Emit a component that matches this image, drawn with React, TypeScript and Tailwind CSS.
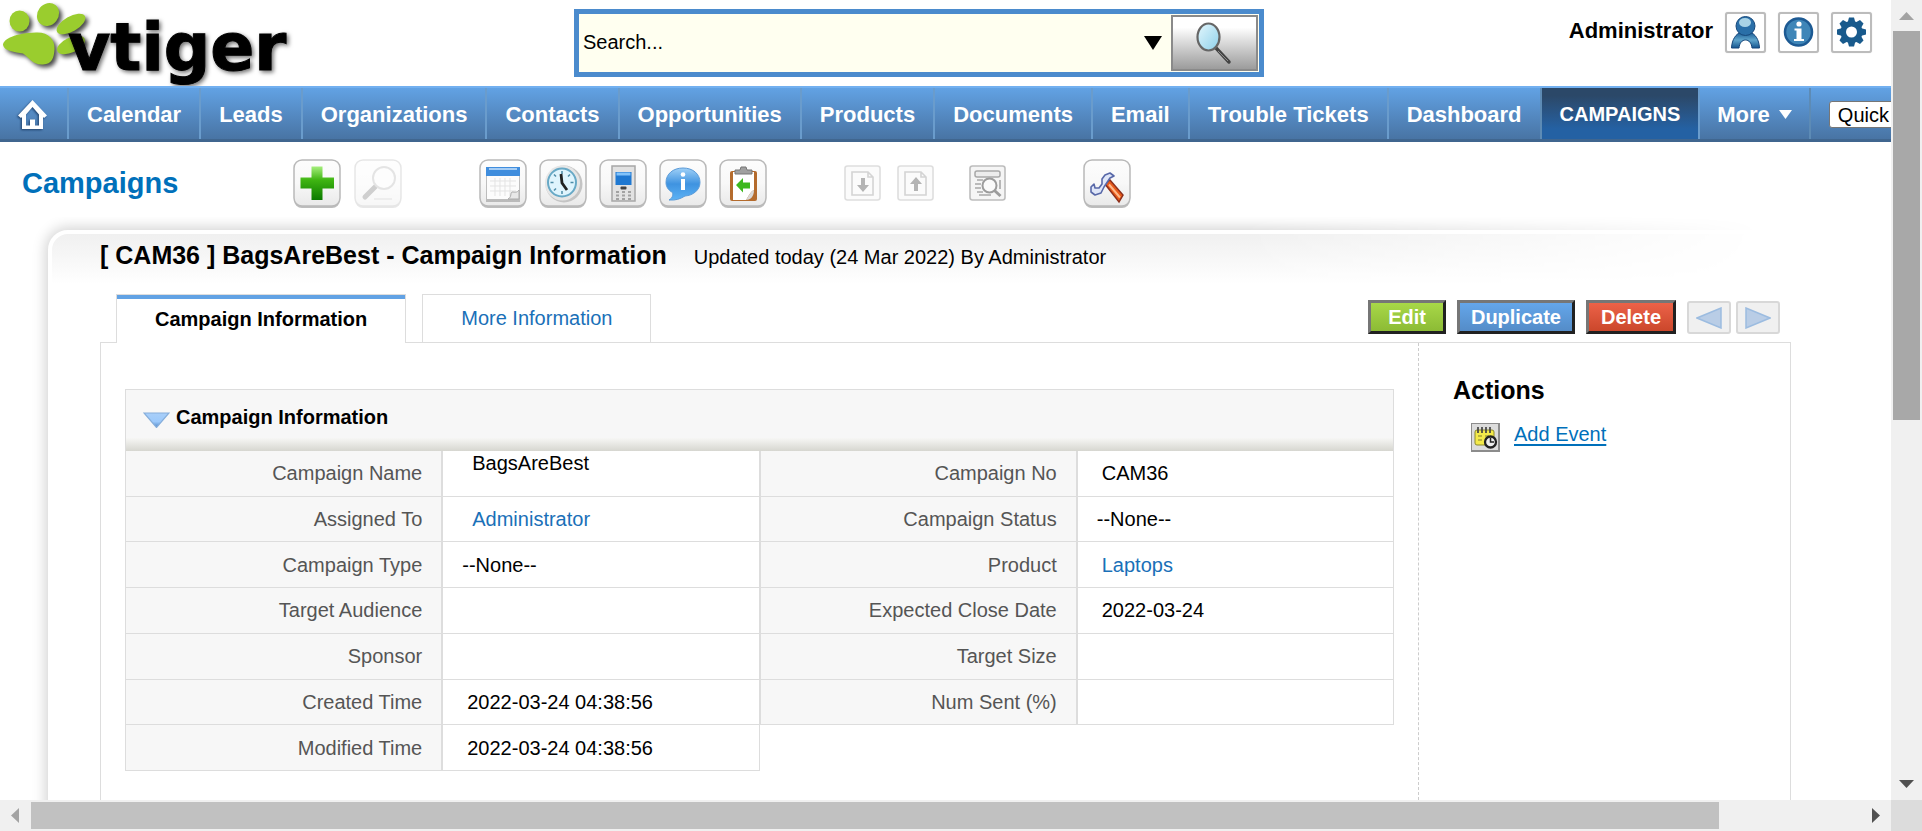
import React from "react";

type Field = { label: string; value?: string; kind?: "inset" | "pick" | "plain" | "raised"; linked?: boolean };

const modules = [
  "Calendar",
  "Leads",
  "Organizations",
  "Contacts",
  "Opportunities",
  "Products",
  "Documents",
  "Email",
  "Trouble Tickets",
  "Dashboard",
];

const rows: [Field, Field?][] = [
  [
    { label: "Campaign Name", value: "BagsAreBest", kind: "raised" },
    { label: "Campaign No", value: "CAM36", kind: "plain" },
  ],
  [
    { label: "Assigned To", value: "Administrator", kind: "inset", linked: true },
    { label: "Campaign Status", value: "--None--", kind: "pick" },
  ],
  [
    { label: "Campaign Type", value: "--None--", kind: "pick" },
    { label: "Product", value: "Laptops", kind: "plain", linked: true },
  ],
  [{ label: "Target Audience" }, { label: "Expected Close Date", value: "2022-03-24", kind: "plain" }],
  [{ label: "Sponsor" }, { label: "Target Size" }],
  [{ label: "Created Time", value: "2022-03-24 04:38:56", kind: "plain" }, { label: "Num Sent (%)" }],
  [{ label: "Modified Time", value: "2022-03-24 04:38:56", kind: "plain" }],
];

const valueStyles: Record<string, string> = {
  raised: "pl-[29px] align-top",
  inset: "pl-[29px] align-middle",
  pick: "pl-[19px] align-middle",
  plain: "pl-6 align-middle",
};

function Defs() {
  return (
    <svg className="absolute size-0" aria-hidden="true">
      <defs>
        <linearGradient id="tile" x1="0" y1="0" x2="0" y2="1">
          <stop offset="0" stopColor="#fdfdfd" />
          <stop offset="0.5" stopColor="#f8f8f8" />
          <stop offset="1" stopColor="#e9e9e9" />
        </linearGradient>
        <linearGradient id="green" x1="0" y1="0" x2="0" y2="1">
          <stop offset="0" stopColor="#a5ee7c" />
          <stop offset="0.4" stopColor="#3fb512" />
          <stop offset="1" stopColor="#0b7a00" />
        </linearGradient>
        <linearGradient id="blue" x1="0" y1="0" x2="0" y2="1">
          <stop offset="0" stopColor="#9fd0f7" />
          <stop offset="0.5" stopColor="#3f93e0" />
          <stop offset="1" stopColor="#5cb2f5" />
        </linearGradient>
        <linearGradient id="steel" x1="0" y1="0" x2="0" y2="1">
          <stop offset="0" stopColor="#14558f" />
          <stop offset="0.5" stopColor="#5fa5cc" />
          <stop offset="1" stopColor="#14558f" />
        </linearGradient>
        <linearGradient id="lens" x1="0" y1="0" x2="1" y2="1">
          <stop offset="0" stopColor="#e4f7fd" />
          <stop offset="1" stopColor="#8dd0ea" />
        </linearGradient>
        <linearGradient id="tri" x1="0" y1="0" x2="0" y2="1">
          <stop offset="0" stopColor="#a9cff9" />
          <stop offset="0.6" stopColor="#9cc9fb" />
          <stop offset="1" stopColor="#4f86c6" />
        </linearGradient>
      </defs>
    </svg>
  );
}

function Logo() {
  return (
    <svg viewBox="0 0 310 86" className="h-[86px] w-[310px] overflow-visible" role="img" aria-label="vtiger">
      <g className="drop-shadow-[3px_3px_2px_rgba(0,0,0,0.7)]" fill="#9acd2e">
        <ellipse cx="19.500" cy="21" rx="10" ry="10.500" />
        <ellipse cx="48" cy="14.500" rx="10.500" ry="12" transform="rotate(38 48 14.500)" />
        <ellipse cx="71" cy="24" rx="16" ry="7.500" transform="rotate(-30 71 24)" />
        <ellipse cx="71" cy="45" rx="15" ry="7.500" transform="rotate(-25 71 45)" />
        <path d="M3 45 C3 39 16 33 36 32.500 C49 32 55 40 54.500 49 C54 58 52 64 43 64.500 C32 65 29 57 23 53.500 C15 52 4 51 3 45 Z" />
      </g>
      <text
        x="68"
        y="70"
        fontSize="65"
        fontWeight="700"
        stroke="#000"
        strokeWidth="1"
        className="font-['DejaVu_Sans'] drop-shadow-[2px_2px_2px_rgba(0,0,0,0.55)]"
      >
        vtiger
      </text>
    </svg>
  );
}

function ToolButton({ label, faded, children }: { label: string; faded?: boolean; children: React.ReactNode }) {
  return (
    <button type="button" aria-label={label} className={faded ? "size-12 opacity-35" : "size-12"}>
      <svg viewBox="0 0 48 48" className="size-12 overflow-visible">
        <rect x="1" y="3" width="46" height="46" rx="8" fill="#bdbdbd" />
        <rect x="1" y="1" width="46" height="46" rx="8" fill="url(#tile)" stroke="#b9b9b9" strokeWidth="1.500" />
        {children}
      </svg>
    </button>
  );
}

function SmallTool({ label, strong, children }: { label: string; strong?: boolean; children: React.ReactNode }) {
  return (
    <button type="button" aria-label={label} className="h-9 w-[37px]">
      <svg viewBox="0 0 37 36" className="h-9 w-[37px]">
        <rect
          x="1"
          y="1"
          width="35"
          height="34"
          rx="2.500"
          fill={strong ? "#f5f5f5" : "#fbfbfb"}
          stroke={strong ? "#bdbdbd" : "#dedede"}
          strokeWidth="1.600"
        />
        {children}
      </svg>
    </button>
  );
}

function HeaderIcon({ label, children }: { label: string; children: React.ReactNode }) {
  return (
    <button
      type="button"
      aria-label={label}
      className="flex size-[41px] items-center justify-center rounded-[3px] border-2 border-[#bcbcbc] bg-white shadow-[0_0_1px_#cccccc]"
    >
      <svg viewBox="0 0 37 37" className="size-[37px]">
        {children}
      </svg>
    </button>
  );
}

function SiteHeader() {
  return (
    <header className="grid h-[86px] shrink-0 grid-cols-[574px_690px_1fr]">
      <Logo />
      <form className="mt-[9px] flex h-[68px] items-center border-5 border-[#4b8bcd] bg-[#fffff0]">
        <input
          type="text"
          aria-label="Search"
          placeholder="Search..."
          className="h-full min-w-0 flex-1 bg-transparent pb-0.5 pl-1 outline-none placeholder:text-black"
        />
        <button type="button" aria-label="Choose modules" className="mr-[9px]">
          <svg viewBox="0 0 18 14" className="h-[14px] w-[18px]">
            <path d="M0 0H18L9 14Z" />
          </svg>
        </button>
        <button
          type="submit"
          aria-label="Find"
          className="mr-px flex h-14 w-[87px] items-center justify-center border-2 border-[#8a8a8a] bg-linear-to-b from-white from-20% to-[#9c9c9c] pr-1"
        >
          <svg viewBox="0 0 40 44" className="h-11 w-10">
            <path d="M23 27L36 41" stroke="#444" strokeWidth="3.500" strokeLinecap="round" />
            <path d="M25 30L35 40" stroke="#8b8b8b" strokeWidth="1" />
            <ellipse cx="15.500" cy="16" rx="11" ry="13.500" fill="url(#lens)" stroke="#666" strokeWidth="2.200" />
          </svg>
        </button>
      </form>
      <div className="flex items-start justify-end gap-3 pt-3 pr-[19px]">
        <span className="text-[22px] leading-[38px] font-bold">Administrator</span>
        <HeaderIcon label="My preferences">
          <path
            d="M4.500 34C5 25 9 20 14 18H23C28 20 32 25 32.500 34H25C24.500 29 22 26 18.500 26C15 26 12.500 29 12 34Z"
            fill="url(#steel)"
            stroke="#14457a"
          />
          <circle cx="18.500" cy="12" r="9.500" fill="#2a6fa8" stroke="#17497c" />
          <ellipse cx="18" cy="8.500" rx="6" ry="4.500" fill="#a9d3e6" />
        </HeaderIcon>
        <HeaderIcon label="Help">
          <circle cx="18.500" cy="18" r="13.500" fill="#3f86b8" stroke="#1d5a93" strokeWidth="2.500" />
          <circle cx="19" cy="10" r="2.600" fill="#fff" />
          <path d="M14.500 14.500H21.500V25H24V27H14V25H16.500V16.500H14.500Z" fill="#fff" />
        </HeaderIcon>
        <HeaderIcon label="Settings">
          <g fill="#195a8c">
            <circle cx="18.500" cy="18" r="11" />
            {[0, 45, 90, 135, 180, 225, 270, 315].map((a) => (
              <path key={a} d="M14.500 9L16 3.500H21L22.500 9Z" transform={`rotate(${a} 18.500 18)`} />
            ))}
          </g>
          <circle cx="18.500" cy="18" r="5.500" fill="#fff" />
        </HeaderIcon>
      </div>
    </header>
  );
}

function ModuleNav() {
  const item = "flex shrink-0 items-center border-l-2 border-[#6a9ccc] px-[18px] pt-0.5";
  return (
    <nav className="flex h-14 shrink-0 overflow-hidden border-t-2 border-b-3 border-t-[#72b0f0] border-b-[#40668f] bg-linear-to-b from-[#62a2e4] to-[#4874a4] text-[22px] font-bold whitespace-nowrap text-white">
      <a href="#home" aria-label="Home" className="flex w-[67px] shrink-0 items-center pt-0.5 pl-[18px]">
        <svg
          viewBox="0 0 29 30"
          className="h-[30px] w-[29px] drop-shadow-[-1px_1px_1px_rgba(20,50,90,0.8)]"
          fill="#fff"
        >
          <path
            d="M14.500 0L29 15.500L26 18L25 17V29H4V17L3 18L0 15.500ZM14.500 7L8 14.500V25.500H12V19.500H17V25.500H21V14.500Z"
            fillRule="evenodd"
          />
        </svg>
      </a>
      {modules.map((name) => (
        <a key={name} href="#module" className={item}>
          {name}
        </a>
      ))}
      <a
        href="#campaigns"
        aria-current="page"
        className="flex shrink-0 items-center border-l-2 border-[#5d8bb5] bg-linear-to-b from-[#2b4868] from-15% to-[#2461a3] to-80% px-[18px] text-[20px]"
      >
        CAMPAIGNS
      </a>
      <button type="button" className="flex shrink-0 items-center gap-[9px] border-l-2 border-[#6a9ccc] px-[17px] pt-0.5">
        More
        <svg viewBox="0 0 13 9" className="h-[9px] w-[13px]" fill="#fff">
          <path d="M0 0H13L6.500 9Z" />
        </svg>
      </button>
      <div className="flex shrink-0 items-center border-l-2 border-[#5d8bb5] pt-0.5 pl-[18px]">
        <select
          aria-label="Quick Create"
          className="h-[27px] w-[170px] appearance-none rounded-[3px] border border-[#767676] bg-white pl-2 text-[20px] leading-6 font-normal text-black"
        >
          <option>Quick Create...</option>
        </select>
      </div>
    </nav>
  );
}

function Toolbar() {
  return (
    <div className="flex h-[75px] shrink-0 items-center gap-[77px] pt-[6px] pl-[22px]">
      <div className="flex">
        <h1 className="w-[271px] text-[29px] leading-9 font-bold text-[#0070ba]">Campaigns</h1>
        <div className="-my-[6px] flex gap-[13px]">
          <ToolButton label="Create Campaign">
            <path d="M18.500 7.500H29.500V18.500H41V29.500H29.500V41H18.500V29.500H7.500V18.500H18.500Z" fill="url(#green)" />
          </ToolButton>
          <ToolButton label="Search in Campaigns" faded>
            <path d="M22 27L11 38" stroke="#777" strokeWidth="5" strokeLinecap="round" />
            <circle cx="30" cy="19" r="11" fill="#fafafa" stroke="#b5b5b5" strokeWidth="2" />
            <path d="M20 40H38" stroke="#ccc" strokeWidth="2" />
          </ToolButton>
        </div>
      </div>
      <div className="flex gap-3">
        <ToolButton label="Open Calendar">
          <rect x="7" y="9" width="34" height="34" fill="#9a9a9a" opacity="0.6" />
          <rect x="8" y="8" width="32" height="32" fill="#fcfcfc" />
          <rect x="7" y="8" width="34" height="9" fill="#3f8ddd" />
          <path d="M10 10H38" stroke="#a5cdf5" strokeWidth="2" />
          <path d="M11 22H37M11 27H37M11 32H37M16 19V37M21 19V37M26 19V37M31 19V37" stroke="#e3e3e3" />
          <path d="M29 40C33 38 31 34 33 33C36 33 38 34 40 31V40Z" fill="#e8e8e8" stroke="#aaa" />
        </ToolButton>
        <ToolButton label="World Clock">
          <circle cx="25" cy="25" r="18.500" fill="#c4c4c4" />
          <circle cx="23.500" cy="24" r="17.500" fill="#e6e6e6" />
          <circle cx="23" cy="23.500" r="14" fill="#dff4fd" stroke="#68a9c6" strokeWidth="2" />
          <path
            d="M23 12V15M23 32V35M11.500 23.500H14.500M31.500 23.500H34.500M15 15.500L17 17.500M31 15.500L29 17.500M15 31.500L17 29.500"
            stroke="#4d8ba7"
            strokeWidth="1.500"
          />
          <path d="M22 15L23 24L28 31" fill="none" stroke="#222" strokeWidth="2.800" />
        </ToolButton>
        <ToolButton label="Calculator">
          <rect x="13" y="7" width="23" height="35" fill="#e2e2e2" stroke="#a7a7a7" strokeWidth="1.500" />
          <rect x="16.500" y="13" width="16" height="13" fill="#1f78d1" />
          <path d="M17.500 15H31.500" stroke="#82c3fa" strokeWidth="3" />
          <rect x="21.500" y="27.500" width="6" height="3" rx="1" fill="#444" />
          <path
            d="M17 33H20M23 33H26M29 33H32M17 36.500H20M23 36.500H26M29 36.500H32M17 40H20M23 40H26M29 40H32"
            stroke="#a2a2a2"
            strokeWidth="2"
          />
        </ToolButton>
        <ToolButton label="Chat">
          <path
            d="M24 9C34 9 41 15 41 23.500C41 31 34 36.500 26 37C21 40 17 41.500 10 41C14 38.500 14 36 13.500 33.500C9 31 7 27.500 7 23.500C7 15 14 9 24 9Z"
            fill="url(#blue)"
            stroke="#5b9bd8"
          />
          <circle cx="24" cy="15.500" r="2.300" fill="#fff" />
          <path d="M24 20V31" stroke="#fff" strokeWidth="4" />
        </ToolButton>
        <ToolButton label="Last Viewed">
          <rect x="11" y="12" width="27" height="30" rx="2" fill="#b46b2d" />
          <path d="M14 13H35V31C31 33 30 37 27 41H14Z" fill="#fff" />
          <path d="M35 31C31 33 30 37 27 41C31 41 35 38 35 31Z" fill="#d9d9d9" />
          <path d="M16 11H21L22 8H27L28 11H33V15H16Z" fill="#a0a0a0" stroke="#777" />
          <path d="M17 26L24 19V23.500H31V29.500H24V33.500Z" fill="#3db81e" />
        </ToolButton>
      </div>
      <div className="flex gap-[35px]">
        <div className="flex gap-4">
          <SmallTool label="Import Campaigns">
            <path d="M8 7H24L29 12V30H8ZM24 7V12H29" fill="none" stroke="#d4d4d4" strokeWidth="1.600" />
            <path d="M17 13H21V20H25L19 27L13 20H17Z" fill="#b4b4b4" />
          </SmallTool>
          <SmallTool label="Export Campaigns">
            <path d="M8 7H24L29 12V30H8ZM24 7V12H29" fill="none" stroke="#d4d4d4" strokeWidth="1.600" />
            <path d="M17 26H21V19H25L19 12L13 19H17Z" fill="#b4b4b4" />
          </SmallTool>
        </div>
        <SmallTool label="Find Duplicates" strong>
          <rect x="6" y="6" width="25" height="6" rx="2" fill="#ececec" stroke="#a8a8a8" strokeWidth="1.500" />
          <path d="M8 15H14M6 19H12M6 23H12M8 27H14M31 15V24M10 30H22" fill="none" stroke="#a8a8a8" strokeWidth="1.600" />
          <circle cx="20.500" cy="20.500" r="7" fill="#fafafa" stroke="#9c9c9c" strokeWidth="2" />
          <path d="M25.500 25.500L31.500 31" stroke="#9c9c9c" strokeWidth="3" />
        </SmallTool>
      </div>
      <ToolButton label="Campaigns Settings">
        <path d="M22 25L27 21L40 36L36 43Z" fill="#e85a1a" stroke="#8c2f1c" strokeWidth="1.500" />
        <path d="M26 25.500L37 38.500" stroke="#ffb98a" strokeWidth="2" />
        <path
          d="M19 20L22 16L27 14L31 17L27 19L25 22L21 28L18 34L12 36L8 33L8 28L11 25L12 29L16 29L19 25Z"
          fill="#dfe6f8"
          stroke="#5868a8"
          strokeWidth="1.600"
          strokeLinejoin="round"
        />
      </ToolButton>
    </div>
  );
}

function LabelCell({ field }: { field: Field }) {
  return (
    <th
      scope="row"
      className="w-1/4 border-x border-b border-[#dddddd] bg-[#f7f7f7] py-0 pr-[19px] text-right font-normal text-[#555555]"
    >
      {field.label}
    </th>
  );
}

function ValueCell({ field }: { field: Field }) {
  return (
    <td className={`w-1/4 border-x border-b border-[#dddddd] bg-white py-0 ${valueStyles[field.kind ?? "plain"]}`}>
      {field.linked ? (
        <a href="#record" className="text-[#1a70b8]">
          {field.value}
        </a>
      ) : (
        field.value
      )}
    </td>
  );
}

function DetailBlock() {
  return (
    <section className="min-w-0 flex-1 pt-[46px] pr-6 pl-6">
      <div className="border border-b-0 border-[#dddddd] bg-[#f7f7f7]">
        <h3 className="flex h-12 items-start pt-[13px] pl-[17px] leading-7 font-bold">
          <button type="button" aria-label="Collapse Campaign Information" className="mt-[9px] mr-[6px]">
            <svg viewBox="0 0 27 16" className="h-4 w-[27px]">
              <path d="M1 1H26L13.500 15.500Z" fill="url(#tri)" stroke="#86aedb" strokeWidth="1.200" />
            </svg>
          </button>
          Campaign Information
        </h3>
        <div className="h-[13px] bg-linear-to-b from-[#f7f7f5] to-[#d6d6d0]" />
      </div>
      <table className="h-[320px] w-full table-fixed border-separate border-spacing-0 leading-6">
        <tbody>
          {rows.map(([left, right]) => (
            <tr key={left.label}>
              <LabelCell field={left} />
              <ValueCell field={left} />
              {right ? (
                <>
                  <LabelCell field={right} />
                  <ValueCell field={right} />
                </>
              ) : (
                <td colSpan={2} />
              )}
            </tr>
          ))}
        </tbody>
      </table>
    </section>
  );
}

function PagerButton({ label, path }: { label: string; path: string }) {
  return (
    <button
      type="button"
      aria-label={label}
      className="mt-px flex h-[33px] w-11 items-center justify-center rounded-[3px] border-2 border-[#d8d8d8] bg-[#f0f0f0]"
    >
      <svg viewBox="0 0 26 22" className="h-[22px] w-[26px]">
        <path d={path} fill="#b9cde6" stroke="#9cbce0" strokeWidth="1.500" />
      </svg>
    </button>
  );
}

function RecordPanel() {
  const action =
    "h-[34px] border-3 border-t-[#767676] border-r-[#212121] border-b-[#212121] border-l-[#767676] leading-7 font-bold text-white";
  return (
    <main className="relative flex flex-1 flex-col">
      <div
        aria-hidden="true"
        className="absolute top-0 right-[130px] bottom-0 left-[30px] overflow-hidden mask-[linear-gradient(to_right,black_70%,transparent)]"
      >
        <div className="absolute top-[13px] -right-5 -bottom-10 left-[18px] rounded-tl-[20px] border-4 border-white bg-white bg-linear-to-b from-[#f0f0f0] to-white to-[50px] shadow-[0_0_13px_3px_rgba(0,0,0,0.17)]" />
      </div>
      <div className="relative mx-[100px] flex flex-1 flex-col">
        <div className="flex items-baseline gap-[27px] pt-[22px]">
          <h2 className="text-[25px] leading-8 font-bold">[ CAM36 ] BagsAreBest - Campaign Information</h2>
          <span>Updated today (24 Mar 2022) By Administrator</span>
        </div>
        <div className="mt-[23px] flex h-[49px] justify-between">
          <div className="flex items-start gap-4 pl-4">
            <a href="#info" className="relative z-10 border border-b-0 border-[#dddddd] bg-white font-bold">
              <span className="block h-12 border-t-4 border-[#62a2e4] px-[38px] leading-10">Campaign Information</span>
            </a>
            <a
              href="#more"
              className="h-12 border border-b-0 border-[#dddddd] bg-white px-[38px] leading-[46px] text-[#1a70b8]"
            >
              More Information
            </a>
          </div>
          <div className="flex items-start gap-[11px] pt-[6px] pr-[11px]">
            <button type="button" className={`${action} bg-linear-to-b from-[#a8d848] to-[#8cbb35] px-[17px]`}>
              Edit
            </button>
            <button type="button" className={`${action} bg-linear-to-b from-[#64a6ea] to-[#548cc8] px-[11px]`}>
              Duplicate
            </button>
            <button type="button" className={`${action} bg-linear-to-b from-[#ec6248] to-[#cb472b] px-3`}>
              Delete
            </button>
            <div className="flex gap-[5px]">
              <PagerButton label="Previous record" path="M25 1V21L1 11Z" />
              <PagerButton label="Next record" path="M1 1V21L25 11Z" />
            </div>
          </div>
        </div>
        <div className="-mt-px flex flex-1 border border-b-0 border-[#dddddd] bg-white">
          <DetailBlock />
          <aside className="w-[372px] shrink-0 border-l border-dashed border-[#cccccc] pt-[31px] pl-[34px]">
            <h2 className="text-[25px] leading-8 font-bold">Actions</h2>
            <a href="#event" className="mt-4 ml-[18px] flex items-start gap-[14px] text-[#0070ba]">
              <svg viewBox="0 0 29 29" className="mt-px size-[29px]" aria-hidden="true">
                <rect width="29" height="29" fill="#8c8c8c" />
                <rect x="1" y="1" width="26" height="26" fill="#dcdcdc" />
                <rect x="4" y="7" width="19" height="15" rx="2" fill="#f4ea4a" stroke="#8d8a2c" />
                <path d="M7 4V10M11 4V10M15 4V10M19 4V10" stroke="#444" strokeWidth="1.700" />
                <path d="M7 13H11M7 17H11M14 13H18" stroke="#a8a23a" strokeWidth="1.500" />
                <circle cx="19.500" cy="19" r="5.500" fill="#eee" stroke="#222" strokeWidth="2.300" />
                <path d="M19.500 15V19H23" fill="none" stroke="#222" strokeWidth="1.500" />
              </svg>
              <span className="underline decoration-2 underline-offset-3">Add Event</span>
            </a>
          </aside>
        </div>
      </div>
    </main>
  );
}

function Arrow({ path, dark }: { path: string; dark?: boolean }) {
  return (
    <svg viewBox="0 0 31 31" className="size-[31px] shrink-0" fill={dark ? "#505050" : "#a3a3a3"} aria-hidden="true">
      <path d={path} />
    </svg>
  );
}

export default function App() {
  return (
    <div className="grid h-screen grid-cols-[minmax(0,1fr)_31px] grid-rows-[minmax(0,1fr)_31px] overflow-hidden bg-white font-['Liberation_Sans',Arial,sans-serif] text-[20px] leading-6 text-black">
      <Defs />
      <div className="flex min-h-0 flex-col overflow-hidden">
        <SiteHeader />
        <ModuleNav />
        <Toolbar />
        <RecordPanel />
      </div>
      <div className="flex flex-col items-center bg-[#f0f0f0]">
        <Arrow path="M8 20H23L15.500 12Z" />
        <div className="flex w-[27px] flex-1 flex-col">
          <div className="h-[389px] bg-[#a8a8a8]" />
        </div>
        <Arrow path="M8 11H23L15.500 19Z" dark />
      </div>
      <div className="flex items-center bg-[#f0f0f0]">
        <Arrow path="M19 8V23L11 15.500Z" />
        <div className="flex h-[27px] flex-1 pr-[141px]">
          <div className="flex-1 bg-[#c1c1c1]" />
        </div>
        <Arrow path="M12 8V23L20 15.500Z" dark />
      </div>
      <div className="bg-[#dcdcdc]" />
    </div>
  );
}
